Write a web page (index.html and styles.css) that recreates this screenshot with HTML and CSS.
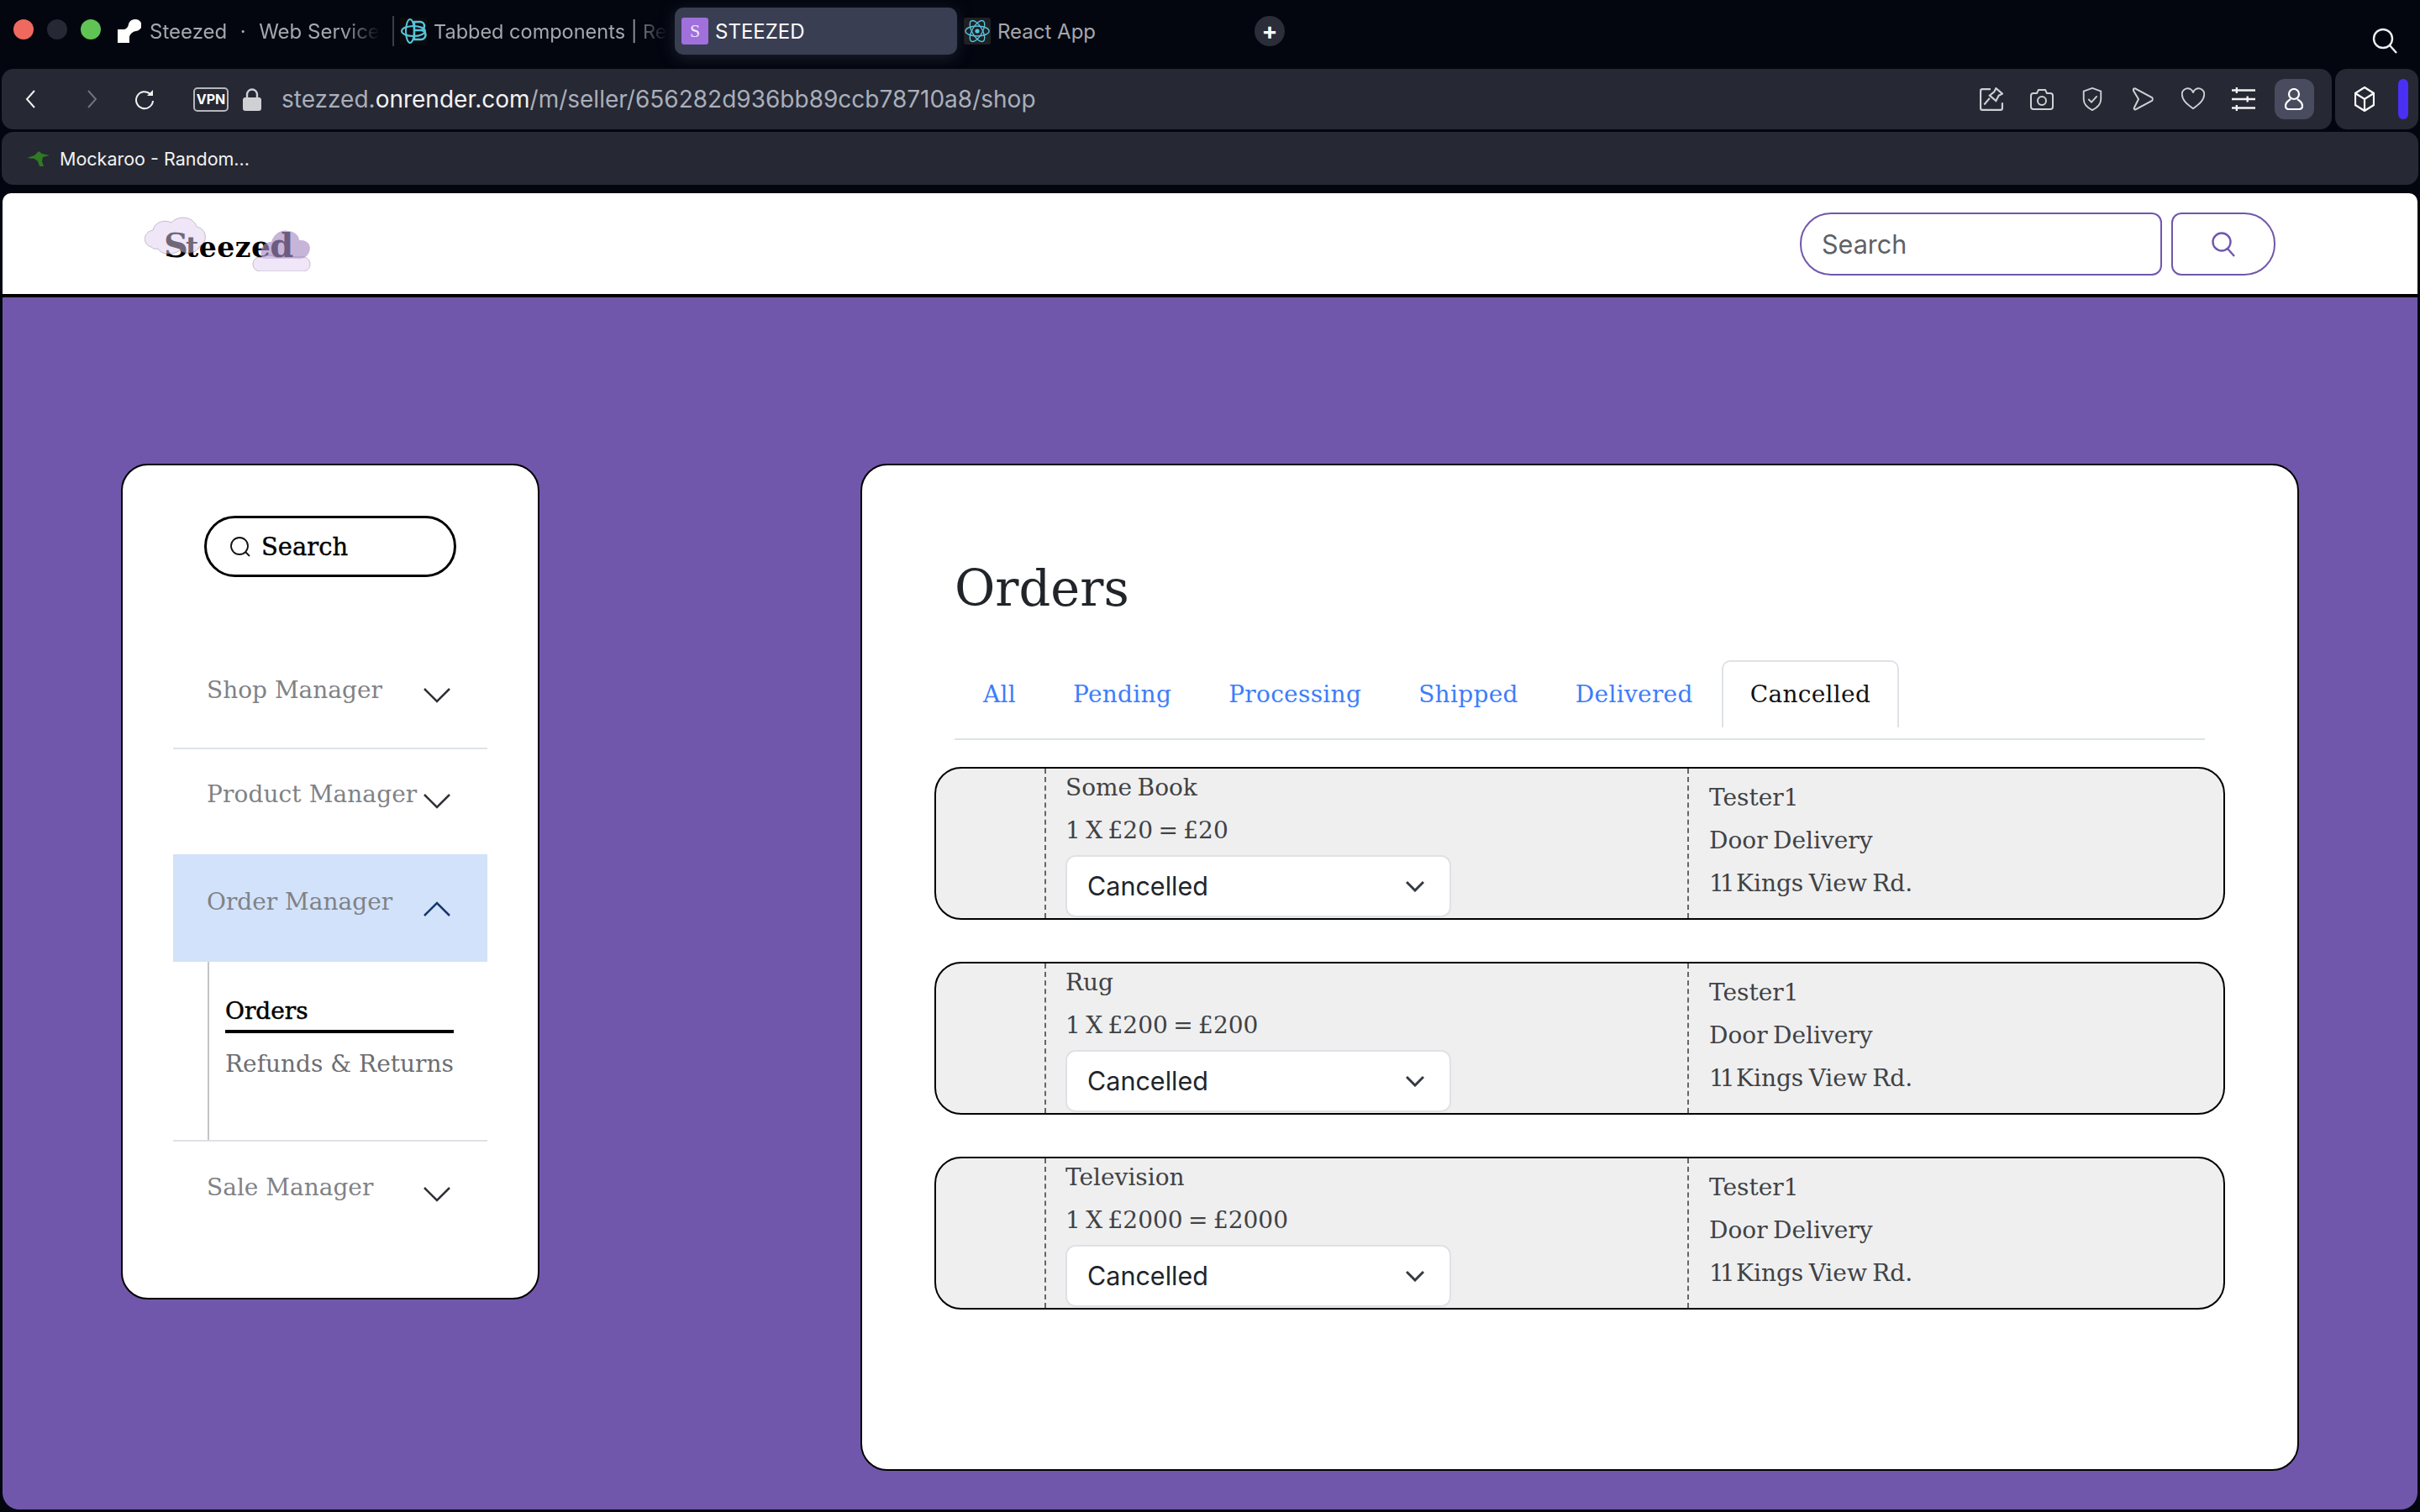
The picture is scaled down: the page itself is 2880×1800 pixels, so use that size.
FILE: index.html

```html
<!DOCTYPE html>
<html lang="en">
<head>
  <meta charset="UTF-8">
  <title>STEEZED</title>
  <link rel="stylesheet" href="styles.css">
</head>
<body>
  <div class="tabbar">
    <span class="light light-red"></span>
    <span class="light light-off"></span>
    <span class="light light-green"></span>

    <div class="tab tab-first">
      <svg class="fav-render" viewBox="0 0 28 28"><path fill="#fff" d="M0 28V12h6c4 0 6-2 7-6 1-4 4-6 8-6a7 7 0 0 1 1 14c-4 .5-7 3-8 7v7z"/></svg>
      <span class="tab-title">Steezed &nbsp;<span class="dot">·</span>&nbsp; Web Service</span>
    </div>
    <span class="tab-sep"></span>
    <div class="tab tab-second">
      <svg class="fav" viewBox="0 0 32 32"><rect width="32" height="32" fill="#0b0b0e"/><g fill="none" stroke="#58c4dc" stroke-width="2"><ellipse cx="16" cy="16" rx="14" ry="6"/><ellipse cx="12" cy="16" rx="5" ry="14"/><path d="M17 5h7a4 4 0 0 1 0 10h-7zM17 15h8a4 4 0 0 1 0 11h-8z" stroke-width="2.5"/></g></svg>
      <span class="tab-title">Tabbed components | Re</span>
    </div>
    <div class="tab tab-active">
      <span class="fav-steezed">S</span>
      <span class="tab-title">STEEZED</span>
    </div>
    <div class="tab tab-react">
      <svg class="fav" viewBox="0 0 32 32"><rect width="32" height="32" rx="3" fill="#1f2024"/><g fill="none" stroke="#58c4dc" stroke-width="1.4"><ellipse cx="16" cy="16" rx="14" ry="6"/><ellipse cx="16" cy="16" rx="14" ry="6" transform="rotate(60 16 16)"/><ellipse cx="16" cy="16" rx="14" ry="6" transform="rotate(120 16 16)"/></g><circle cx="16" cy="16" r="2.6" fill="#58c4dc"/></svg>
      <span class="tab-title">React App</span>
    </div>
    <span class="new-tab">+</span>
    <svg class="tabbar-search" viewBox="0 0 30 32" fill="none" stroke="#eceef2" stroke-width="2.4"><circle cx="13" cy="13" r="11"/><path d="M21 21l8 9"/></svg>
  </div>

  <div class="toolbar">
    <div class="urlbar">
      <svg class="nav-back" viewBox="0 0 12 22" fill="none" stroke="#f2f2f2" stroke-width="2"><path d="M11 1L2 11l9 10"/></svg>
      <svg class="nav-forward" viewBox="0 0 12 22" fill="none" stroke="#70727c" stroke-width="2"><path d="M1 1l9 10-9 10"/></svg>
      <svg class="nav-reload" viewBox="0 0 24 26" fill="none" stroke="#f2f2f2" stroke-width="2"><path d="M19 7a10 10 0 1 0 3 8"/><path d="M22 2v7h-7" fill="#f2f2f2" stroke="none"/></svg>
      <span class="vpn">VPN</span>
      <svg class="lock" viewBox="0 0 22 27"><path fill="none" stroke="#cfd0d4" stroke-width="2.4" d="M5 12V7.500a6 6 0 0 1 12 0V12"/><rect y="11" width="22" height="16" rx="3" fill="#cfd0d4"/></svg>
      <span class="url">stezzed.<b>onrender.com</b>/m/seller/656282d936bb89ccb78710a8/shop</span>
      <div class="url-icons">
        <span class="url-slot"><svg viewBox="0 0 26 26" fill="none" stroke="#cfd0d4" stroke-width="2"><path d="M12 2H3a2 2 0 0 0-2 2v19a2 2 0 0 0 2 2h20a2 2 0 0 0 2-2v-6"/><path d="M18 1l7 6-4 2-3 6-7-6 5-4zM11 12l-6 7"/></svg></span>
        <span class="url-slot"><svg viewBox="0 0 28 26" fill="none" stroke="#cfd0d4" stroke-width="2"><path d="M4 6h4l2-4h8l2 4h4a3 3 0 0 1 3 3v13a3 3 0 0 1-3 3H4a3 3 0 0 1-3-3V9a3 3 0 0 1 3-3z"/><circle cx="14" cy="15" r="5"/></svg></span>
        <span class="url-slot"><svg viewBox="0 0 26 30" fill="none" stroke="#cfd0d4" stroke-width="2"><path d="M13 1l11 4v10c0 7-5 11-11 14C7 26 2 22 2 15V5z"/><path d="M8 15l4 4 7-8"/></svg></span>
        <span class="url-slot"><svg viewBox="0 0 26 28" fill="none" stroke="#cfd0d4" stroke-width="2"><path d="M2 2c1-1 2-1 3 0l19 10c1 1 1 3 0 4L5 26c-1 1-3 0-2-2l5-10L2 4z"/></svg></span>
        <span class="url-slot"><svg viewBox="0 0 30 28" fill="none" stroke="#cfd0d4" stroke-width="2"><path d="M15 26C7 20 1 15 1 9a7 7 0 0 1 14-3 7 7 0 0 1 14 3c0 6-6 11-14 17z"/></svg></span>
        <span class="url-slot"><svg viewBox="0 0 24 24" fill="none" stroke="#f2f2f2" stroke-width="2"><path d="M0 3h24M0 12h24M0 21h24M5 0v6M16 9v6M5 18v6"/></svg></span>
        <span class="url-slot"><span class="profile"><svg viewBox="0 0 22 26" fill="none" stroke="#fff" stroke-width="2.200"><circle cx="11" cy="7" r="6"/><path d="M7 13c-3 2-6 5-6 8 0 3 2 4 4 4h12c2 0 4-1 4-4 0-3-3-6-6-8"/></svg></span></span>
      </div>
    </div>
    <div class="ext-pill">
      <svg viewBox="0 0 24 30" fill="none" stroke="#fff" stroke-width="2.200"><path d="M12 1l11 7v14l-11 7-11-7V8zM1 8l11 7 11-7M12 15v14"/></svg>
      <span class="ext-bar"></span>
    </div>
  </div>

  <div class="bookmarks">
    <svg class="roo" viewBox="0 0 28 18"><path fill="#2f7a22" d="M0 8l9-3 5-5 4 3 9 2-8 2-1 5 2 6h-5l-2-6-4-3z"/></svg>
    <span>Mockaroo - Random...</span>
  </div>

  <div class="page">
    <header class="site-header">
      <a class="logo">
        <span class="logo-text"><span class="big">S</span>teez<span class="mid">e</span><span class="tall">d</span></span>
        <svg class="logo-clouds" viewBox="0 0 200 65">
          <path class="cloud" d="M8 36C-3 33-2 18 10 16 12 6 24 3 32 7 40-2 58-1 62 12 74 14 76 30 66 35 62 44 48 46 42 40 34 46 20 46 16 38 13 39 10 38 8 36z"/>
          <path class="cloud-dark" d="M141 50c-6-10 0-20 10-20 3-10 12-15 19-13 9 0 14 6 14 11 11-1 15 7 12 14-3 7-9 9-15 8z"/>
          <path class="cloud" d="M138 65c-12 0-12-17 0-17 5-3 12-3 18 0h32c12 0 12 17 0 17z"/>
        </svg>
      </a>
      <div class="header-search">
        <div class="header-input">Search</div>
        <div class="header-btn">
          <svg viewBox="0 0 28 32" fill="none" stroke="#7157ab" stroke-width="2.400"><circle cx="12" cy="12" r="10.500"/><path d="M19 20l8 9"/></svg>
        </div>
      </div>
    </header>

    <main class="content">
      <aside class="sidebar">
        <div class="side-search">
          <svg viewBox="0 0 24 24" fill="none" stroke="#111" stroke-width="1.800"><circle cx="11" cy="11" r="10"/><path d="M18 18l5 5"/></svg>
          <span>Search</span>
        </div>
        <nav class="side-nav">
          <div class="nav-row nav-shop">
            <span>Shop Manager</span>
            <svg class="chev" viewBox="0 0 32 18" fill="none" stroke="#2f3136" stroke-width="2.500"><path d="M1 1l15 15L31 1"/></svg>
          </div>
          <div class="nav-row nav-product">
            <span>Product Manager</span>
            <svg class="chev" viewBox="0 0 32 18" fill="none" stroke="#2f3136" stroke-width="2.500"><path d="M1 1l15 15L31 1"/></svg>
          </div>
          <div class="nav-row nav-order">
            <span>Order Manager</span>
            <svg class="chev" viewBox="0 0 32 18" fill="none" stroke="#16376c" stroke-width="2.500"><path d="M1 17L16 2l15 15"/></svg>
          </div>
          <div class="sub-nav">
            <div class="sub-link sub-active">Orders</div>
            <div class="sub-link">Refunds &amp; Returns</div>
          </div>
          <div class="nav-row nav-sale">
            <span>Sale Manager</span>
            <svg class="chev" viewBox="0 0 32 18" fill="none" stroke="#2f3136" stroke-width="2.500"><path d="M1 1l15 15L31 1"/></svg>
          </div>
        </nav>
      </aside>

      <section class="panel">
        <h1>Orders</h1>
        <ul class="tabs">
          <li>All</li>
          <li>Pending</li>
          <li>Processing</li>
          <li>Shipped</li>
          <li>Delivered</li>
          <li class="tab-on">Cancelled</li>
        </ul>

        <div class="orders">
          <div class="order">
            <div class="order-thumb"></div>
            <div class="order-item">
              <p>Some Book</p>
              <p>1 X £20 = £20</p>
              <div class="status">Cancelled
                <svg viewBox="0 0 22 14" fill="none" stroke="#343a40" stroke-width="3"><path d="M1 2l10 10L21 2"/></svg>
              </div>
            </div>
            <div class="order-buyer">
              <p>Tester1</p>
              <p>Door Delivery</p>
              <p><span class="num">11</span> Kings View Rd.</p>
            </div>
          </div>
          <div class="order">
            <div class="order-thumb"></div>
            <div class="order-item">
              <p>Rug</p>
              <p>1 X £200 = £200</p>
              <div class="status">Cancelled
                <svg viewBox="0 0 22 14" fill="none" stroke="#343a40" stroke-width="3"><path d="M1 2l10 10L21 2"/></svg>
              </div>
            </div>
            <div class="order-buyer">
              <p>Tester1</p>
              <p>Door Delivery</p>
              <p><span class="num">11</span> Kings View Rd.</p>
            </div>
          </div>
          <div class="order">
            <div class="order-thumb"></div>
            <div class="order-item">
              <p>Television</p>
              <p>1 X £2000 = £2000</p>
              <div class="status">Cancelled
                <svg viewBox="0 0 22 14" fill="none" stroke="#343a40" stroke-width="3"><path d="M1 2l10 10L21 2"/></svg>
              </div>
            </div>
            <div class="order-buyer">
              <p>Tester1</p>
              <p>Door Delivery</p>
              <p><span class="num">11</span> Kings View Rd.</p>
            </div>
          </div>
        </div>
      </section>
    </main>
  </div>
</body>
</html>
```

FILE: styles.css

```css
* {
  box-sizing: border-box;
}
html, body {
  margin: 0;
  height: 1800px;
  overflow: hidden;
}
body {
  width: 2880px;
  background-color: #03060f;
  font-family: Inter, "Liberation Sans", sans-serif;
}
svg {
  display: block;
}

/* browser tabs */
.tabbar {
  display: flex;
  align-items: center;
  height: 82px;
  padding: 0 0 8px 16px;
}
.light {
  width: 24px;
  height: 24px;
  border-radius: 50%;
  margin-right: 16px;
  margin-top: -4px;
}
.light-red { background: #f0695e; }
.light-off { background: #262833; }
.light-green { background: #5fc453; margin-right: 0; }
.tab {
  display: flex;
  align-items: center;
  height: 56px;
  font-size: 24px;
  color: #a5a7ae;
  white-space: nowrap;
  overflow: hidden;
}
.tab-first {
  width: 312px;
  margin-left: 20px;
  gap: 10px;
}
.tab-second {
  width: 318px;
  margin-left: 7px;
  gap: 8px;
  font-size: 23.5px;
}
.tab-first .tab-title,
.tab-second .tab-title {
  -webkit-mask-image: linear-gradient(to left, transparent 0, #000 44px);
  mask-image: linear-gradient(to left, transparent 0, #000 44px);
}
.dot {
  margin: 0 2px;
}
.tab-sep {
  width: 2px;
  height: 36px;
  margin-left: 15px;
  background: #3a3d4a;
}
.tab-active {
  width: 336px;
  margin-left: 9px;
  padding-left: 8px;
  gap: 8px;
  color: #fff;
  background: #3a3e52;
  border-radius: 10px;
  box-shadow: 0 4px 18px rgba(50, 54, 72, 0.55);
}
.tab-react {
  margin-left: 8px;
  gap: 8px;
}
.fav, .fav-steezed {
  width: 32px;
  height: 32px;
  flex: none;
}
.fav-render {
  width: 28px;
  height: 28px;
  flex: none;
}
.fav-steezed {
  display: flex;
  align-items: center;
  justify-content: center;
  background: #a070dc;
  border-radius: 3px;
  color: #efe6fb;
  font: 22px "Liberation Serif", serif;
}
.new-tab {
  display: flex;
  align-items: center;
  justify-content: center;
  width: 36px;
  height: 36px;
  margin-left: 189px;
  border-radius: 50%;
  background: #2b2d38;
  color: #fff;
  font-size: 28px;
  font-weight: 700;
  line-height: 1;
}
.tabbar-search {
  width: 30px;
  height: 32px;
  margin-left: auto;
  margin-right: 27px;
  margin-top: 24px;
}

/* address bar */
.toolbar {
  display: flex;
  gap: 4px;
  height: 72px;
  padding: 0 2px;
}
.urlbar {
  display: flex;
  align-items: center;
  width: 2773px;
  padding-right: 15px;
  background: #262833;
  border-radius: 14px;
}
.nav-back { width: 12px; height: 22px; margin-left: 28px; }
.nav-forward { width: 12px; height: 22px; margin-left: 62px; }
.nav-reload { width: 24px; height: 26px; margin-left: 44px; }
.vpn {
  width: 42px;
  height: 29px;
  margin-left: 46px;
  border: 2px solid #b6b7bc;
  border-radius: 5px;
  color: #fff;
  font-size: 16px;
  font-weight: 700;
  line-height: 25px;
  text-align: center;
}
.lock { width: 22px; height: 27px; margin-left: 17px; }
.url {
  margin-left: 24px;
  font-size: 28px;
  color: #a9afbb;
  white-space: nowrap;
}
.url b {
  font-weight: 400;
  color: #f2f2f2;
}
.url-icons {
  display: flex;
  margin-left: auto;
}
.url-slot {
  display: flex;
  align-items: center;
  justify-content: center;
  width: 60px;
  height: 48px;
}
.url-slot svg {
  width: 28px;
  height: 28px;
}
.profile {
  display: flex;
  align-items: center;
  justify-content: center;
  width: 47px;
  height: 48px;
  background: #494c5f;
  border-radius: 12px;
}
.profile svg {
  width: 22px;
  height: 26px;
}
.ext-pill {
  display: flex;
  align-items: center;
  flex: 1;
  padding-left: 23px;
  background: #262833;
  border-radius: 14px;
}
.ext-pill svg {
  width: 24px;
  height: 30px;
}
.ext-bar {
  width: 12px;
  height: 48px;
  margin-left: 28px;
  background: #4a30f5;
  border-radius: 6px;
}
.bookmarks {
  display: flex;
  align-items: center;
  height: 63px;
  margin: 3px 2px 0;
  padding-left: 30px;
  gap: 11px;
  background: #262833;
  border-radius: 14px;
  color: #f2f2f2;
  font-size: 21.5px;
}
.roo {
  width: 28px;
  height: 18px;
}

/* site */
.page {
  margin: 10px 3px 0;
  height: 1567px;
  overflow: hidden;
  border-radius: 10px 10px 20px 20px;
  font-family: "DejaVu Serif", "Liberation Serif", serif;
}
.site-header {
  display: flex;
  align-items: center;
  justify-content: space-between;
  height: 124px;
  padding: 0 169px;
  background: #fff;
  border-bottom: 4px solid #000;
}
.logo {
  position: relative;
  display: block;
  width: 200px;
  height: 65px;
}
.logo-text {
  display: flex;
  align-items: baseline;
  padding: 14px 0 0 23px;
  color: #000;
  font-size: 33px;
  font-weight: 700;
  letter-spacing: 0.5px;
  line-height: 40px;
}
.logo-text .big { font-size: 40px; letter-spacing: -3px; }
.logo-text .mid { font-size: 36px; }
.logo-text .tall { font-size: 40px; margin-left: -1px; }
.logo-clouds {
  position: absolute;
  left: 0;
  top: 0;
  width: 200px;
  height: 65px;
}
.cloud {
  fill: #e0d0f0;
  opacity: 0.5;
  stroke: #6e5a80;
  stroke-width: 0.8;
}
.cloud-dark {
  fill: #a88cc4;
  opacity: 0.65;
}
.header-search {
  display: flex;
  gap: 11px;
}
.header-input {
  width: 431px;
  height: 75px;
  padding-left: 24px;
  border: 2px solid #7157ab;
  border-radius: 37px 12px 12px 37px;
  color: #5f6166;
  font-family: Inter, "Liberation Sans", sans-serif;
  font-size: 30.5px;
  line-height: 71px;
}
.header-btn {
  display: flex;
  align-items: center;
  justify-content: center;
  width: 124px;
  height: 75px;
  border: 2px solid #7157ab;
  border-radius: 12px 37px 37px 12px;
}
.header-btn svg {
  width: 28px;
  height: 32px;
  margin-top: 4px;
}
.content {
  display: flex;
  align-items: flex-start;
  gap: 382px;
  height: 1443px;
  padding: 198px 0 0 141px;
  background: #7157ab;
}

/* sidebar */
.sidebar {
  width: 498px;
  height: 995px;
  padding-top: 60px;
  background: #fff;
  border: 2px solid #000;
  border-radius: 32px;
}
.side-search {
  display: flex;
  align-items: center;
  gap: 13px;
  width: 300px;
  height: 73px;
  margin: 0 auto;
  padding-left: 28px;
  border: 3px solid #000;
  border-radius: 37px;
  color: #000;
  font-size: 29px;
  -webkit-text-stroke: 0.4px #000;
}
.side-search svg {
  width: 24px;
  height: 24px;
}
.side-nav {
  margin: 76px 60px 0;
}
.nav-row {
  display: flex;
  justify-content: space-between;
  align-items: flex-start;
  padding: 0 44px 0 40px;
  color: #808286;
  font-size: 28px;
  line-height: 40px;
}
.nav-row span {
  white-space: nowrap;
}
.chev {
  width: 32px;
  height: 18px;
  margin-top: 19px;
  flex: none;
}
.nav-shop {
  height: 129px;
  padding-top: 39px;
  border-bottom: 2px solid #dee2e6;
}
.nav-shop .chev { margin-top: 17px; }
.nav-product {
  height: 125px;
  padding-top: 34px;
  letter-spacing: 0.1px;
}
.nav-order {
  height: 128px;
  padding-top: 37px;
  background: #d2e2fa;
}
.sub-nav {
  height: 212px;
  margin-left: 41px;
  padding: 39px 0 0 19px;
  border-left: 2px solid #c4c4c4;
}
.sub-link {
  width: 272px;
  color: #6c6e72;
  font-size: 28px;
  line-height: 40px;
  white-space: nowrap;
}
.sub-active {
  margin-bottom: 17px;
  padding-bottom: 2px;
  color: #000;
  -webkit-text-stroke: 0.5px #000;
  border-bottom: 4px solid #000;
}
.nav-sale {
  padding-top: 35px;
  border-top: 2px solid #dee2e6;
}

/* orders panel */
.panel {
  width: 1712px;
  height: 1199px;
  background: #fff;
  border: 2px solid #000;
  border-radius: 32px;
}
.panel h1 {
  margin: 112px 0 0 110px;
  color: #212529;
  font-size: 59px;
  font-weight: 400;
  line-height: 70px;
}
.tabs {
  display: flex;
  width: 1488px;
  height: 95px;
  margin: 50px 0 0 110px;
  padding: 0 0 13px;
  list-style: none;
  border-bottom: 2px solid #dee2e6;
  color: #3d7dfa;
  font-size: 28px;
  letter-spacing: 0.3px;
}
.tabs li {
  padding: 0 34px;
  line-height: 82px;
}
.tabs .tab-on {
  color: #111;
  border: 2px solid #dee2e6;
  border-bottom: 0;
  border-radius: 10px 10px 0 0;
  padding: 0 32px;
  line-height: 78px;
}
.orders {
  display: flex;
  flex-direction: column;
  gap: 50px;
  width: 1536px;
  margin: 32px 0 0 86px;
}
.order {
  display: grid;
  grid-template-columns: 129px 765px 1fr;
  height: 182px;
  background: #efefef;
  border: 2px solid #000;
  border-radius: 32px;
  color: #404245;
  font-size: 28px;
  line-height: 42px;
  word-spacing: -2.5px;
}
.order p {
  margin: 0 0 9px;
  white-space: nowrap;
}
.order .num {
  letter-spacing: -5px;
}
.order-item, .order-buyer {
  border-left: 2px dashed #666;
}
.order-item {
  padding: 2px 0 0 23px;
}
.order-item p + p {
  margin-bottom: 8px;
}
.order-buyer {
  padding: 14px 0 0 24px;
}
.status {
  display: flex;
  align-items: center;
  justify-content: space-between;
  width: 459px;
  height: 74px;
  padding: 0 30px 0 24px;
  background: #fff;
  border: 2px solid #dee2e6;
  border-radius: 12px;
  color: #212529;
  font-family: Inter, "Liberation Sans", sans-serif;
  font-size: 30.5px;
  word-spacing: 0;
}
.status svg {
  width: 22px;
  height: 14px;
}
```
